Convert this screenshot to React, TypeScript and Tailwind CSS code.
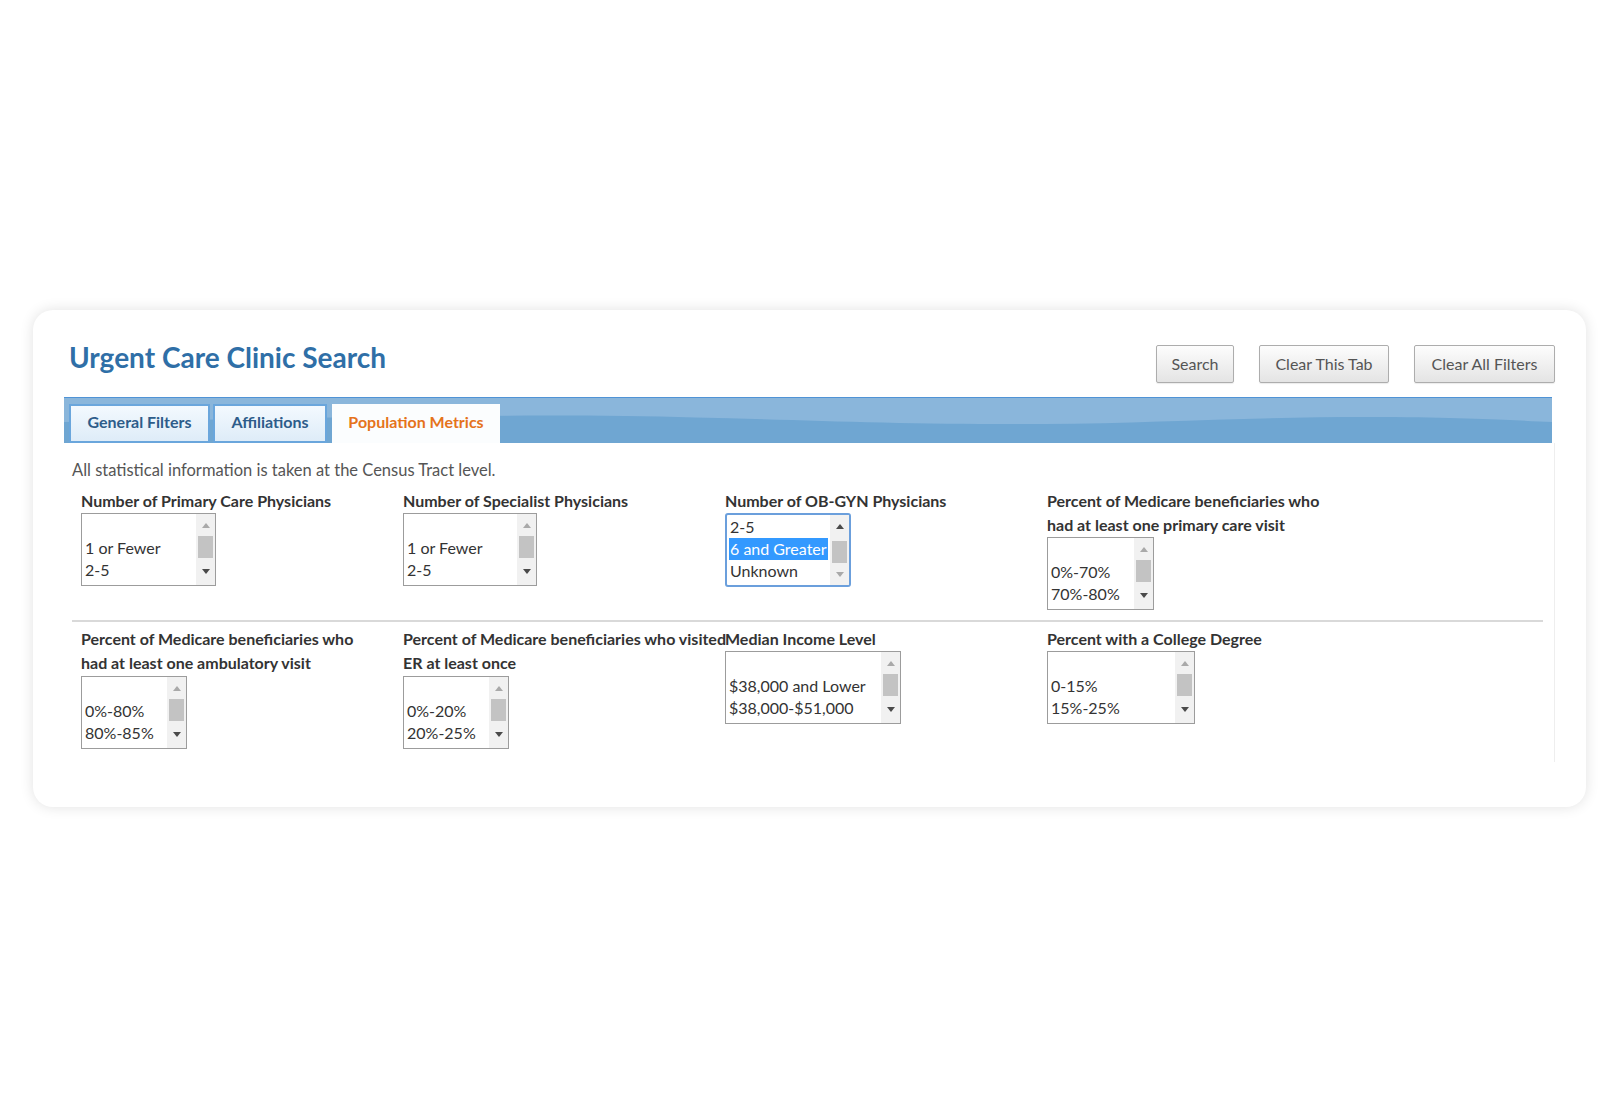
import React from 'react';

type ListBoxProps = {
  w: string;
  items: string[];
  selected?: number;
  focused?: boolean;
  upOn?: boolean;
  downOn?: boolean;
  thumbTop?: string;
};

function Arrow({ dir, on }: { dir: 'up' | 'down'; on: boolean }) {
  const color = on ? 'border-b-[#4a4a4a]' : 'border-b-[#a9a9a9]';
  const colorDown = on ? 'border-t-[#4a4a4a]' : 'border-t-[#a9a9a9]';
  return dir === 'up' ? (
    <div className={`w-0 h-0 border-x-[4px] border-x-transparent border-b-[5px] ${color}`} />
  ) : (
    <div className={`w-0 h-0 border-x-[4px] border-x-transparent border-t-[5px] ${colorDown}`} />
  );
}

function ListBox({ w, items, selected, focused, upOn = false, downOn = true, thumbTop = 'mt-0' }: ListBoxProps) {
  return (
    <div
      className={
        focused
          ? `${w} h-[74px] flex border-2 border-[#6b9fdc] rounded-[3px] bg-white overflow-hidden`
          : `${w} h-[73px] flex border border-[#9c9c9c] bg-white overflow-hidden`
      }
    >
      <div className="flex-1 min-w-0 overflow-hidden px-[2px] pt-[1px] text-[16px]">
        {items.map((it, i) => (
          <div
            key={i}
            className={
              i === selected
                ? 'h-[22px] leading-[22px] pl-[1px] whitespace-nowrap bg-[#3399ff] text-white'
                : 'h-[22px] leading-[22px] pl-[1px] whitespace-nowrap text-[#333]'
            }
          >
            {it}
          </div>
        ))}
      </div>
      <div className="w-[19px] flex-shrink-0 bg-[#f1f1f1] flex flex-col">
        <div className="h-[22px] flex items-center justify-center">
          <Arrow dir="up" on={upOn} />
        </div>
        <div className={`h-[22px] mx-[2px] bg-[#c3c3c3] ${thumbTop}`} />
        <div className="flex-1 flex items-center justify-center">
          <Arrow dir="down" on={downOn} />
        </div>
      </div>
    </div>
  );
}

function Field({ label, children }: { label: React.ReactNode; children: React.ReactNode }) {
  return (
    <div className="flex flex-col items-start">
      <div className="text-[16px] leading-[24px] font-bold text-[#333] whitespace-nowrap">{label}</div>
      {children}
    </div>
  );
}

const TABS = [
  { label: 'General Filters', w: 'w-[141px]' },
  { label: 'Affiliations', w: 'w-[114px]' },
];

export default function App() {
  return (
    <div className="w-[1620px] h-[1116px] bg-white pt-[310px] pl-[33px] font-['Lato',sans-serif]">
      <div className="w-[1553px] h-[497px] bg-white rounded-[20px] shadow-[0_0_14px_rgba(0,0,0,0.12)] px-[31px] pt-[31px]">
        {/* Header */}
        <div className="flex items-start justify-between">
          <h1 className="pl-[5px] text-[28px] leading-[32px] font-bold text-[#2f6fa7]">Urgent Care Clinic Search</h1>
          <div className="mt-[4px] flex gap-[25px]">
            {['Search', 'Clear This Tab', 'Clear All Filters'].map((b, i) => (
              <button
                key={b}
                className={`${i === 0 ? 'w-[78px]' : i === 1 ? 'w-[130px]' : 'w-[141px]'} h-[38px] border border-[#adadad] rounded-[2px] bg-gradient-to-b from-[#fdfdfd] to-[#e4e4e4] text-[16px] text-[#555] shadow-[0_1px_1px_rgba(0,0,0,0.08)]`}
              >
                {b}
              </button>
            ))}
          </div>
        </div>

        {/* Tab bar */}
        <div className="relative mt-[14px] mr-[3px] h-[46px] border-t border-[#4f93d6] bg-[#8ab6db]">
          <svg className="absolute inset-0 w-full h-full" viewBox="0 0 1487 45" preserveAspectRatio="none">
            <path
              d="M0 24 C 150 22, 380 16, 560 18 C 700 20, 820 27, 980 26 C 1100 25, 1200 18, 1330 19 C 1420 20, 1460 23, 1487 24 L1487 45 L0 45 Z"
              fill="#6fa6d2"
            />
          </svg>
          <div className="relative flex items-end h-full pl-[5px] gap-[3px]">
            {TABS.map((t) => (
              <div
                key={t.label}
                className={`${t.w} h-[39px] pb-[3px] border-2 border-[#6aa6dc] bg-gradient-to-b from-[#f3f9fe] to-[#deecf8] flex items-center justify-center text-[16px] font-bold text-[#2d5c8a]`}
              >
                {t.label}
              </div>
            ))}
            <div className="ml-[2px] w-[168px] h-[39px] pb-[3px] bg-[#fbfdfe] flex items-center justify-center text-[16px] font-bold text-[#e5731b]">
              Population Metrics
            </div>
          </div>
        </div>

        {/* Content */}
        <div className="h-[319px] border-r border-[#eeeeee]">
          <p className="pl-[8px] pt-[17px] text-[16.5px] leading-[20px] text-[#555]">
            All statistical information is taken at the Census Tract level.
          </p>

          <div className="pl-[17px] pt-[9px] grid grid-cols-[322px_322px_322px_322px] items-start">
            <Field label="Number of Primary Care Physicians">
              <ListBox w="w-[135px]" items={['', '1 or Fewer', '2-5']} />
            </Field>
            <Field label="Number of Specialist Physicians">
              <ListBox w="w-[134px]" items={['', '1 or Fewer', '2-5']} />
            </Field>
            <Field label="Number of OB-GYN Physicians">
              <ListBox
                w="w-[126px]"
                items={['2-5', '6 and Greater', 'Unknown']}
                selected={1}
                focused
                upOn
                downOn={false}
                thumbTop="mt-[4px]"
              />
            </Field>
            <Field
              label={
                <>
                  Percent of Medicare beneficiaries who
                  <br />
                  had at least one primary care visit
                </>
              }
            >
              <ListBox w="w-[107px]" items={['', '0%-70%', '70%-80%']} />
            </Field>
          </div>

          <div className="mt-[10px] ml-[8px] w-[1471px] h-[2px] bg-[#d9d9d9]" />

          <div className="pl-[17px] pt-[5px] grid grid-cols-[322px_322px_322px_322px] items-start">
            <Field
              label={
                <>
                  Percent of Medicare beneficiaries who
                  <br />
                  had at least one ambulatory visit
                </>
              }
            >
              <div className="mt-[1px]">
                <ListBox w="w-[106px]" items={['', '0%-80%', '80%-85%']} />
              </div>
            </Field>
            <Field
              label={
                <>
                  Percent of Medicare beneficiaries who visited
                  <br />
                  ER at least once
                </>
              }
            >
              <div className="mt-[1px]">
                <ListBox w="w-[106px]" items={['', '0%-20%', '20%-25%']} />
              </div>
            </Field>
            <Field label="Median Income Level">
              <ListBox
                w="w-[176px]"
                items={['', '$38,000 and Lower', '$38,000-$51,000', '$51,000-$73,000']}
              />
            </Field>
            <Field label="Percent with a College Degree">
              <ListBox w="w-[148px]" items={['', '0-15%', '15%-25%']} />
            </Field>
          </div>
        </div>
      </div>
    </div>
  );
}
